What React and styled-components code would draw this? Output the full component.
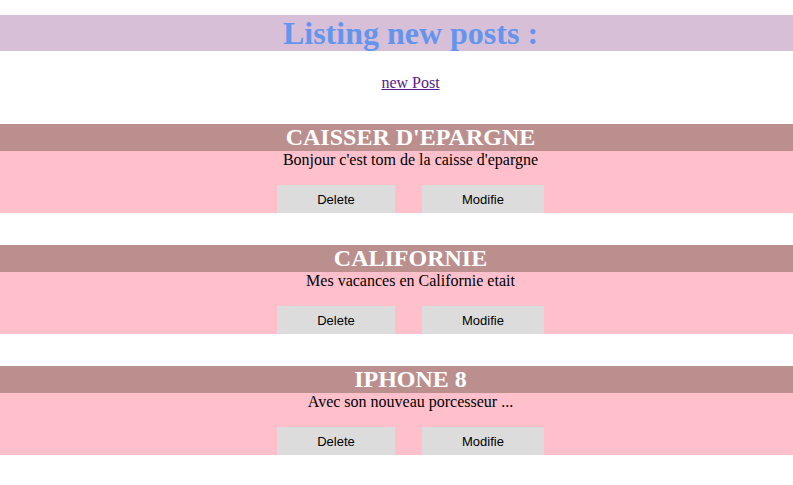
import React from 'react';
import styled, { createGlobalStyle } from 'styled-components';

const GlobalStyle = createGlobalStyle`
  body {
    margin: 0;
    background: #fff;
    font-family: "Liberation Serif", "Times New Roman", serif;
  }
`;

const Page = styled.div`
  display: flex;
  flex-direction: column;
  padding-top: 15px;
`;

const Title = styled.h1`
  margin: 0;
  height: 36px;
  line-height: 36px;
  padding-left: 28px;
  background-color: thistle;
  color: cornflowerblue;
  font-size: 32px;
  font-weight: bold;
  text-align: center;
`;

const LinkRow = styled.div`
  display: flex;
  justify-content: center;
  padding-left: 28px;
  margin: 23px 0 32px;
`;

const NewLink = styled.a`
  font-size: 16px;
  line-height: 18px;
  color: #551a8b;
`;

const PostList = styled.div`
  display: flex;
  flex-direction: column;
  gap: 32px;
`;

const Post = styled.div`
  display: flex;
  flex-direction: column;
`;

const PostTitle = styled.h2`
  margin: 0;
  height: 27px;
  line-height: 27px;
  padding-left: 28px;
  background-color: rosybrown;
  color: #fff;
  font-size: 24px;
  font-weight: bold;
  text-align: center;
`;

const PostBody = styled.div`
  display: flex;
  flex-direction: column;
  padding-left: 28px;
  background-color: pink;
  height: 62px;
`;

const Content = styled.p`
  margin: 0;
  font-size: 16px;
  line-height: 18px;
  color: #000;
  text-align: center;
`;

const Actions = styled.div`
  display: flex;
  justify-content: center;
  gap: 27px;
  margin-top: 16px;
`;

const Button = styled.button`
  width: ${p => p.$w}px;
  height: 28px;
  border: none;
  background-color: gainsboro;
  font-family: "Liberation Sans", Arial, sans-serif;
  font-size: 13px;
  color: #000;
  padding: 0;
`;

const posts = [
  { title: "CAISSER D'EPARGNE", content: "Bonjour c'est tom de la caisse d'epargne" },
  { title: 'CALIFORNIE', content: 'Mes vacances en Californie etait' },
  { title: 'IPHONE 8', content: 'Avec son nouveau porcesseur ...' },
];

const App = () => {
  return (
    <Page>
      <GlobalStyle />
      <Title>Listing new posts :</Title>
      <LinkRow>
        <NewLink href="#">new Post</NewLink>
      </LinkRow>
      <PostList>
        {posts.map(post => (
          <Post key={post.title}>
            <PostTitle>{post.title}</PostTitle>
            <PostBody>
              <Content>{post.content}</Content>
              <Actions>
                <Button $w={118}>Delete</Button>
                <Button $w={122}>Modifie</Button>
              </Actions>
            </PostBody>
          </Post>
        ))}
      </PostList>
    </Page>
  );
};

export default App;
